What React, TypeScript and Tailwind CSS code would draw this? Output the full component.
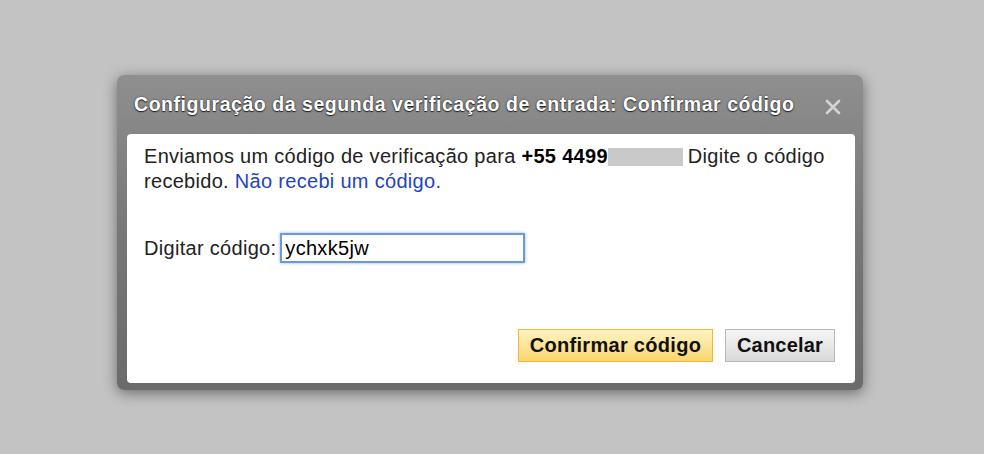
export default function App() {
  return (
    <div className="w-[984px] h-[454px] bg-[#c3c3c3] pt-[75px] pl-[117px] font-['Liberation_Sans',Arial,sans-serif] overflow-hidden">
      <div className="w-[746px] h-[315px] rounded-[7px] bg-gradient-to-b from-[#8f8f8f] via-[#777777] to-[#6b6b6b] shadow-[0_3px_14px_rgba(0,0,0,0.45)] flex flex-col pb-[7px]">
        <div className="h-[59px] flex items-center justify-between pl-[17px] pr-[22px]">
          <h1 className="text-white font-bold text-[19.5px] tracking-[0.55px] whitespace-nowrap [text-shadow:0_1px_1px_#222,0_0_2px_#333]">
            Configuração da segunda verificação de entrada: Confirmar código
          </h1>
          <svg width="16" height="16" viewBox="0 0 16 16" className="mt-[4px] shrink-0">
            <path d="M2 2 L14 14 M14 2 L2 14" stroke="#d4d4d4" strokeWidth="2.6" strokeLinecap="round" />
          </svg>
        </div>
        <div className="flex-1 ml-[10px] mr-[8px] bg-white rounded-[4px] flex flex-col pl-[17px] pr-[20px] pt-[10px] pb-[21px] text-[20px] tracking-[0.3px] text-[#222] leading-[25px]">
          <p>
            Enviamos um código de verificação para <b className="text-black">+55 4499</b>
            <span className="inline-block w-[75px] h-[18px] bg-[#c9c9c9] align-[-3px] mr-[5px]" />
            Digite o código recebido. <a className="text-[#2244bb]">Não recebi um código.</a>
          </p>
          <div className="flex items-center mt-[39px] gap-[4px]">
            <label className="whitespace-nowrap">Digitar código:</label>
            <div className="w-[245px] h-[30px] border-[2px] border-[#6c9bd4] shadow-[0_0_3px_#8fb6e6] flex items-center pl-[3px] text-black text-[20px]">
              ychxk5jw
            </div>
          </div>
          <div className="mt-auto flex justify-end gap-[12px]">
            <button className="w-[195px] h-[33px] border border-[#f0b640] bg-gradient-to-b from-[#fff3c2] to-[#fad66a] font-bold text-[20px] text-[#111]">
              Confirmar código
            </button>
            <button className="w-[110px] h-[33px] border border-[#b8b8b8] bg-gradient-to-b from-[#f6f6f6] to-[#d9d9d9] font-bold text-[20px] tracking-[0.2px] text-[#111]">
              Cancelar
            </button>
          </div>
        </div>
      </div>
    </div>
  )
}
